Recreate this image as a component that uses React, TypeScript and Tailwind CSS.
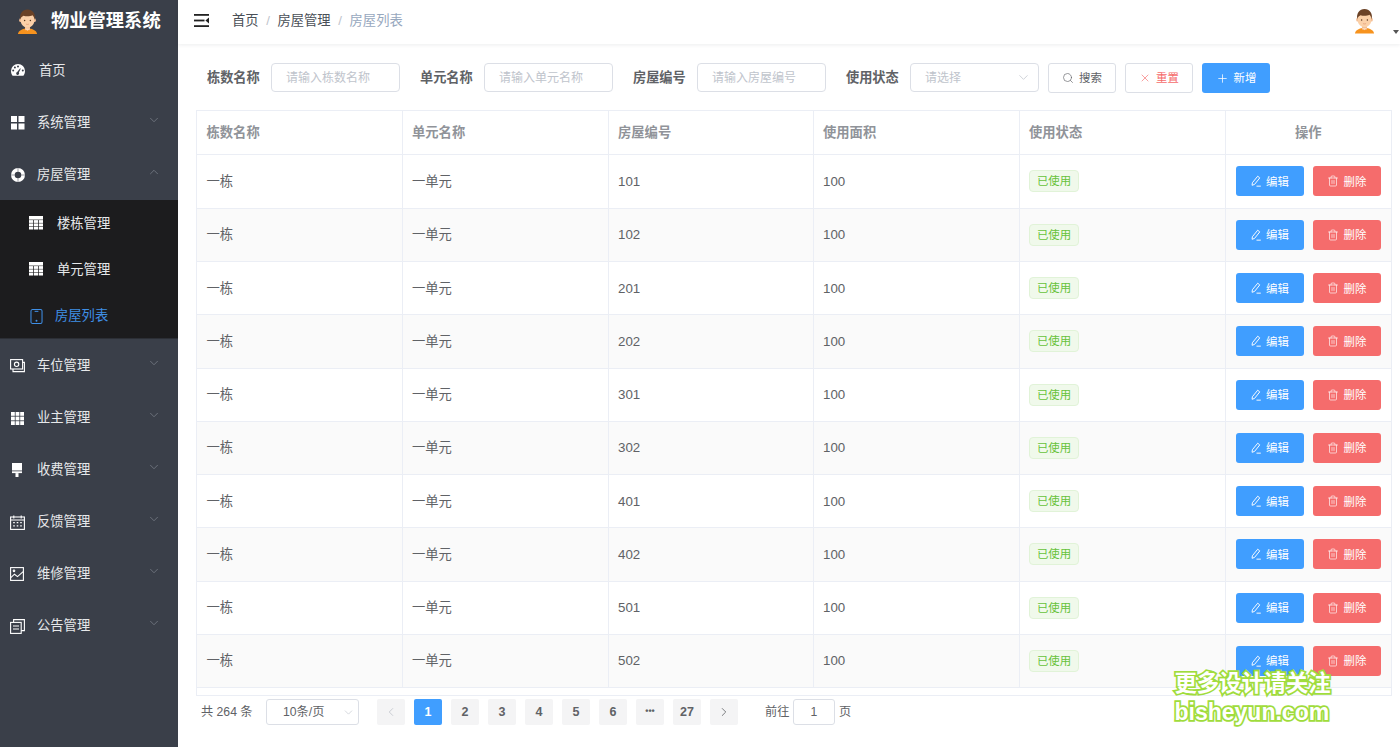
import React from "react";
import { ChevronDown, ChevronUp, ChevronLeft, ChevronRight, Search, X, Plus, Trash2 } from "lucide-react";

const FONT = "font-['Liberation_Sans','Noto_Sans_CJK_SC',sans-serif]";

type IP = { className?: string };
const Gauge = ({ className }: IP) => (
  <svg viewBox="0 0 14 12" className={className} fill="currentColor">
    <path fillRule="evenodd" d="M7 0a7 7 0 0 0-7 7c0 1.9.6 3.3 1.4 4.4.2.3.5.4.8.4h9.6c.3 0 .6-.1.8-.4C13.4 10.3 14 8.9 14 7a7 7 0 0 0-7-7zM2.2 7.6a1 1 0 1 1 0-2 1 1 0 0 1 0 2zm1.7-3.2a1 1 0 1 1 0-2 1 1 0 0 1 0 2zM7 3.4a1 1 0 1 1 0-2 1 1 0 0 1 0 2zm.9 5.1a1.5 1.5 0 1 1-1.7-.6l3-3.6.5.4-1.8 3.8zm3.9-.9a1 1 0 1 1 0-2 1 1 0 0 1 0 2z" />
  </svg>
);
const Squares = ({ className }: IP) => (
  <svg viewBox="0 0 14 14" className={className} fill="currentColor">
    <rect x="0" y="0" width="6" height="6" />
    <rect x="7.5" y="0" width="6" height="6" />
    <rect x="0" y="7.5" width="6" height="6" />
    <rect x="7.5" y="7.5" width="6" height="6" />
  </svg>
);
const Buoy = ({ className }: IP) => (
  <svg viewBox="0 0 14 14" className={className} fill="currentColor">
    <path fillRule="evenodd" d="M7 0a7 7 0 1 0 0 14A7 7 0 0 0 7 0zm0 3.700a3.300 3.300 0 1 1 0 6.600 3.300 3.300 0 0 1 0-6.600z" />
    <path d="M7 0v3.800M7 10.200V14M0 7h3.800M10.200 7H14" stroke="#3a3f49" strokeWidth="0.5" />
  </svg>
);
const TableIcon = ({ className }: IP) => (
  <svg viewBox="0 0 14 14" className={className} fill="currentColor">
    <rect x="0" y="0" width="14" height="3.600" />
    {[4.1, 7.4, 10.7].flatMap((y) =>
      [0, 4.9, 9.8].map((x) => <rect key={`${x}-${y}`} x={x} y={y} width="4.200" height="2.800" />)
    )}
  </svg>
);
const Tablet = ({ className }: IP) => (
  <svg viewBox="0 0 13 16" className={className} fill="none" stroke="currentColor" strokeWidth="1.1">
    <rect x="0.600" y="0.600" width="11.800" height="14.800" rx="1.600" />
    <path d="M4.500 2.500h4" />
    <circle cx="6.500" cy="12.600" r="0.500" fill="currentColor" />
  </svg>
);
const Money = ({ className }: IP) => (
  <svg viewBox="0 0 15 14" className={className} fill="none" stroke="currentColor" strokeWidth="1.1">
    <rect x="0.600" y="0.600" width="12" height="9.400" />
    <circle cx="6.600" cy="5.300" r="2.200" />
    <path d="M3 10v2.600h11.400V3.400h-1.800" />
  </svg>
);
const Grid9 = ({ className }: IP) => (
  <svg viewBox="0 0 13 13" className={className} fill="currentColor">
    {[0, 4.6, 9.2].flatMap((y) =>
      [0, 4.6, 9.2].map((x) => <rect key={`${x}-${y}`} x={x} y={y} width="3.800" height="3.800" />)
    )}
  </svg>
);
const Brush = ({ className }: IP) => (
  <svg viewBox="0 0 12 14" className={className} fill="currentColor">
    <rect x="1" y="0" width="10" height="7.500" />
    <rect x="1" y="8.300" width="10" height="1.800" />
    <rect x="4.500" y="10.100" width="3" height="3.900" />
  </svg>
);
const DateIcon = ({ className }: IP) => (
  <svg viewBox="0 0 15 15" className={className} fill="none" stroke="currentColor" strokeWidth="1.1">
    <rect x="0.600" y="2" width="13.800" height="12.400" />
    <path d="M0.600 5h13.800M3.800 0.400v3M11.200 0.400v3" />
    <path d="M3.200 7.600h1.600M6.700 7.600h1.600M10.200 7.600h1.600M3.200 10.800h1.600M6.700 10.800h1.600M10.200 10.800h1.600" strokeWidth="1.2" />
  </svg>
);
const Picture = ({ className }: IP) => (
  <svg viewBox="0 0 14 14" className={className} fill="none" stroke="currentColor" strokeWidth="1.1">
    <rect x="0.600" y="0.600" width="12.800" height="12.800" />
    <path d="M0.800 10.600l3.700-3.400 3 2.400 5.700-5" />
    <circle cx="4" cy="3.800" r="0.800" />
  </svg>
);
const Copy = ({ className }: IP) => (
  <svg viewBox="0 0 15 15" className={className} fill="none" stroke="currentColor" strokeWidth="1.1">
    <rect x="0.600" y="3.400" width="10.600" height="11" />
    <path d="M3.600 3.400V0.600h10.800v11h-3.200M3 7h6M3 10h6" />
  </svg>
);
const Fold = ({ className }: IP) => (
  <svg viewBox="0 0 15 13" className={className} fill="currentColor">
    <rect x="0" y="0" width="15" height="1.800" />
    <rect x="0" y="5.600" width="10.500" height="1.800" />
    <rect x="0" y="11.200" width="15" height="1.800" />
    <path d="M15 3.500v6L11.400 6.500z" />
  </svg>
);
const Pen = ({ className }: IP) => (
  <svg viewBox="0 0 14 14" className={className} fill="none" stroke="currentColor" strokeWidth="1.1">
    <path d="M9 1.400l2.400 2L5.300 11 2.400 12l.4-3z" />
    <path d="M7.600 13h5" />
  </svg>
);
const Face = ({ className }: IP) => (
  <svg viewBox="0 0 24 26" className={className}>
    <path d="M2 26c.6-3.600 4.800-5.600 10-5.600s9.400 2 10 5.600z" fill="#f7931e" />
    <rect x="9.400" y="17" width="5.200" height="5" fill="#f3bd94" />
    <path d="M9.400 20.400l2.600 2.200 2.600-2.200z" fill="#fbd7b8" />
    <ellipse cx="4.800" cy="11.600" rx="1.500" ry="2" fill="#f3bd94" />
    <ellipse cx="19.200" cy="11.600" rx="1.500" ry="2" fill="#f3bd94" />
    <path d="M5 9c0-4 3-6 7-6s7 2 7 6v3.400c0 4-3.600 7-7 7s-7-3-7-7z" fill="#fbd0a8" />
    <path d="M4.400 11.400C3.400 5 6.600.6 12 .6s8.800 4.400 7.600 10.800c-.6-2.600-1.400-4-2.400-4.800-2.400 1.200-6.400 1.400-9.400.4-1.600.8-3 2-3.400 3.800z" fill="#6b4226" />
    <circle cx="9" cy="12" r=".8" fill="#5a3a22" />
    <circle cx="15" cy="12" r=".8" fill="#5a3a22" />
    <path d="M10.400 15.600c1 .6 2.200.6 3.200 0" stroke="#d98b66" strokeWidth=".6" fill="none" />
  </svg>
);

const topItems1: [string, React.FC<IP>, string][] = [
  ["系统管理", Squares, "w-[14px] h-[14px] ml-px"],
];
const topItems2: [string, React.FC<IP>, string][] = [
  ["车位管理", Money, "w-[15px] h-[14px]"],
  ["业主管理", Grid9, "w-[13px] h-[13px] ml-px"],
  ["收费管理", Brush, "w-[12px] h-[14px] ml-px"],
  ["反馈管理", DateIcon, "w-[15px] h-[15px]"],
  ["维修管理", Picture, "w-[14px] h-[14px]"],
  ["公告管理", Copy, "w-[15px] h-[15px]"],
];

function MenuRow({ label, Icon, iconCls, open }: { label: string; Icon: React.FC<IP>; iconCls: string; open?: boolean }) {
  return (
    <div className="h-[52px] flex items-center pt-[2px] pl-[10px] pr-[17px] text-[13.300px] text-[#e6e8ea]">
      <span className="w-[27px] flex items-center text-white">
        <Icon className={iconCls} />
      </span>
      <span className="flex-1">{label}</span>
      {open ? (
        <ChevronUp className="w-[14px] h-[14px] text-[#7f858f] -mt-[7px]" strokeWidth={1.2} />
      ) : (
        <ChevronDown className="w-[14px] h-[14px] text-[#7f858f] -mt-[7px]" strokeWidth={1.2} />
      )}
    </div>
  );
}

function Sidebar() {
  return (
    <aside className="w-[178px] shrink-0 h-full bg-[#3a3f49] flex flex-col">
      <div className="h-[44px] flex items-center pl-[16px] shrink-0">
        <Face className="w-[23px] h-[25px] -mt-[2px]" />
        <span className="ml-[12px] text-[18.300px] font-bold text-white leading-none -mt-[2px]">物业管理系统</span>
      </div>
      <div className="h-[52px] flex items-center pt-[2px] pl-[11px] text-[13.300px] text-[#e6e8ea]">
        <span className="w-[28px] flex items-center text-white">
          <Gauge className="w-[14px] h-[12px] -mt-[2px]" />
        </span>
        <span>首页</span>
      </div>
      {topItems1.map(([l, I, c]) => (
        <MenuRow key={l} label={l} Icon={I} iconCls={c} />
      ))}
      <MenuRow label="房屋管理" Icon={Buoy} iconCls="w-[14px] h-[14px] ml-px" open />
      <div className="bg-[#1c1c1e] h-[139px] flex flex-col text-[13.300px] pl-[29px] border-b border-[#2c2f36]">
        <div className="h-[46px] flex items-center pt-[2px] text-[#e6e8ea]">
          <TableIcon className="w-[14px] h-[14px] text-white -mt-[3px]" />
          <span className="ml-[14px]">楼栋管理</span>
        </div>
        <div className="h-[46px] flex items-center pt-[2px] text-[#e6e8ea]">
          <TableIcon className="w-[14px] h-[14px] text-white -mt-[3px]" />
          <span className="ml-[14px]">单元管理</span>
        </div>
        <div className="h-[46px] flex items-center pt-[2px] text-[#3f8fe6]">
          <Tablet className="w-[13px] h-[15px] ml-px" />
          <span className="ml-[12px]">房屋列表</span>
        </div>
      </div>
      {topItems2.map(([l, I, c]) => (
        <MenuRow key={l} label={l} Icon={I} iconCls={c} />
      ))}
    </aside>
  );
}

function Header() {
  return (
    <header className="h-[44px] shrink-0 bg-white shadow-[0_1px_4px_rgba(0,21,41,0.08)] flex items-center pl-[16px] text-[13.300px] relative z-10">
      <Fold className="w-[15px] h-[13px] text-[#222] -mt-[3px]" />
      <nav className="ml-[23px] flex items-center -mt-[3px] text-[#4a4f57]">
        <span>首页</span>
        <span className="mx-[7.600px] text-[#c0c4cc]">/</span>
        <span>房屋管理</span>
        <span className="mx-[7.600px] text-[#c0c4cc]">/</span>
        <span className="text-[#97a8be]">房屋列表</span>
      </nav>
      <div className="ml-auto flex items-start h-full relative">
        <Face className="w-[23px] h-[26px] mt-[8px] mr-[24px]" />
        <span className="absolute right-[1px] top-[30px] w-0 h-0 border-x-[3px] border-x-transparent border-t-[4px] border-t-[#555]" />
      </div>
    </header>
  );
}

function Field({ label, ph }: { label: string; ph: string }) {
  return (
    <div className="flex items-center">
      <span className="text-[13.200px] font-bold text-[#606266] w-[64px]">{label}</span>
      <div className="w-[129px] h-[29px] border border-[#dcdfe6] rounded-[4px] flex items-center pl-[14px] pt-px text-[12px] text-[#c0c4cc] bg-white">
        {ph}
      </div>
    </div>
  );
}

function Filters() {
  const btn = "w-[68px] h-[30px] rounded-[3px] flex items-center justify-center text-[11.400px]";
  return (
    <div className="h-[66px] flex items-center pt-[2px] pl-[29px] shrink-0">
      <div className="flex items-center gap-[20px] -mt-px">
        <Field label="栋数名称" ph="请输入栋数名称" />
        <Field label="单元名称" ph="请输入单元名称" />
        <Field label="房屋编号" ph="请输入房屋编号" />
        <div className="flex items-center">
          <span className="text-[13.200px] font-bold text-[#606266] w-[64px]">使用状态</span>
          <div className="w-[129px] h-[29px] border border-[#dcdfe6] rounded-[4px] flex items-center pl-[14px] pr-[7px] text-[12px] text-[#c0c4cc]">
            <span className="flex-1 pt-px">请选择</span>
            <ChevronDown className="w-[15px] h-[15px] text-[#c0c4cc]" strokeWidth={1.2} />
          </div>
        </div>
      </div>
      <div className="flex items-center gap-[9px] ml-[9px]">
        <button className={`${btn} border border-[#dcdfe6] bg-white text-[#606266]`}>
          <Search className="w-[12px] h-[12px] mr-[5px]" strokeWidth={1.3} />
          <span className="pt-px">搜索</span>
        </button>
        <button className={`${btn} border border-[#dcdfe6] bg-white text-[#f56c6c]`}>
          <X className="w-[12px] h-[12px] mr-[5px]" strokeWidth={1.3} />
          <span className="pt-px">重置</span>
        </button>
        <button className={`${btn} bg-[#409eff] text-white`}>
          <Plus className="w-[13px] h-[13px] mr-[5px]" strokeWidth={1.4} />
          <span className="pt-px">新增</span>
        </button>
      </div>
    </div>
  );
}

const rooms = ["101", "102", "201", "202", "301", "302", "401", "402", "501", "502"];

function DataTable() {
  const td = "border-r border-b border-[#ebeef5] pl-[9.500px] pr-0 py-0 text-left font-normal";
  const cell = `${td} pt-px`;
  return (
    <div className="ml-[18px] mr-[8px] h-[586px] shrink-0 border border-[#ebeef5] overflow-hidden">
      <table className="w-full table-fixed border-collapse text-[13.300px] text-[#606266]">
        <colgroup>
          <col className="w-[205px]" />
          <col className="w-[206px]" />
          <col className="w-[205px]" />
          <col className="w-[206px]" />
          <col className="w-[206px]" />
          <col />
        </colgroup>
        <thead>
          <tr className="h-[43px] text-[#909399]">
            {["栋数名称", "单元名称", "房屋编号", "使用面积", "使用状态"].map((h) => (
              <th key={h} className={`${td} pt-[2px] !font-bold`}>
                {h}
              </th>
            ))}
            <th className="border-b border-[#ebeef5] pt-[2px] text-center font-bold">操作</th>
          </tr>
        </thead>
        <tbody>
          {rooms.map((r, i) => (
            <tr
              key={r}
              className={`${i === 0 ? "h-[54.250px]" : "h-[53.250px]"} ${i % 2 ? "bg-[#fafafa]" : "bg-white"}`}
            >
              <td className={cell}>一栋</td>
              <td className={cell}>一单元</td>
              <td className={cell}>{r}</td>
              <td className={cell}>100</td>
              <td className={td}>
                <span className="inline-flex items-center justify-center w-[50px] h-[22px] pt-px rounded-[4px] bg-[#f0f9eb] border border-[#e1f3d8] text-[11.400px] text-[#67c23a]">
                  已使用
                </span>
              </td>
              <td className="border-b border-[#ebeef5] p-0">
                <div className="flex items-center pl-[10px] gap-[9px]">
                  <button className="w-[68px] h-[30px] rounded-[3px] bg-[#409eff] text-white text-[11.400px] flex items-center justify-center">
                    <Pen className="w-[12px] h-[12px] mr-[4px]" />
                    <span className="pt-[2px]">编辑</span>
                  </button>
                  <button className="w-[68px] h-[30px] rounded-[3px] bg-[#f56c6c] text-white text-[11.400px] flex items-center justify-center">
                    <Trash2 className="w-[12px] h-[12px] mr-[5px]" strokeWidth={1.3} />
                    <span className="pt-[2px]">删除</span>
                  </button>
                </div>
              </td>
            </tr>
          ))}
        </tbody>
      </table>
    </div>
  );
}

function PageBtn({ children, active }: { children: React.ReactNode; active?: boolean }) {
  return (
    <span
      className={`w-[28px] h-[26px] rounded-[2px] flex items-center justify-center text-[12.500px] font-bold ${
        active ? "bg-[#409eff] text-white" : "bg-[#f4f4f5] text-[#606266]"
      }`}
    >
      {children}
    </span>
  );
}

function Pagination() {
  return (
    <div className="flex items-center pl-[23px] h-[30px] mt-px shrink-0 text-[12.200px] text-[#606266]">
      <span className="w-[65px]">共 264 条</span>
      <div className="w-[93px] h-[26px] border border-[#dcdfe6] rounded-[3px] flex items-center pl-[16px] pr-[3px]">
        <span className="flex-1">10条/页</span>
        <ChevronDown className="w-[13px] h-[13px] text-[#c0c4cc]" strokeWidth={1.2} />
      </div>
      <div className="ml-[18px] flex items-center gap-[9px]">
        <PageBtn>
          <ChevronLeft className="w-[14px] h-[14px] text-[#c0c4cc]" strokeWidth={1.4} />
        </PageBtn>
        <PageBtn active>1</PageBtn>
        <PageBtn>2</PageBtn>
        <PageBtn>3</PageBtn>
        <PageBtn>4</PageBtn>
        <PageBtn>5</PageBtn>
        <PageBtn>6</PageBtn>
        <PageBtn>
          <span className="text-[9px]">•••</span>
        </PageBtn>
        <PageBtn>27</PageBtn>
        <PageBtn>
          <ChevronRight className="w-[14px] h-[14px] text-[#606266]" strokeWidth={1.4} />
        </PageBtn>
      </div>
      <span className="ml-[27px] w-[24px] whitespace-nowrap">前往</span>
      <div className="mx-[4px] w-[42px] h-[26px] border border-[#dcdfe6] rounded-[3px] flex items-center justify-center">1</div>
      <span>页</span>
    </div>
  );
}

export default function App() {
  return (
    <div className={`w-[1400px] h-[747px] flex overflow-hidden bg-white relative ${FONT}`}>
      <Sidebar />
      <main className="flex-1 flex flex-col min-w-0">
        <Header />
        <Filters />
        <DataTable />
        <Pagination />
      </main>
      <div className="absolute left-[1174.500px] top-[670px] text-white font-bold leading-[28px] [-webkit-text-stroke:3.500px_#a0dc3c] [paint-order:stroke_fill] font-['Liberation_Sans','Noto_Sans_CJK_SC',sans-serif]">
        <div className="text-[22.300px] whitespace-nowrap">更多设计请关注</div>
        <div className="text-[23px] whitespace-nowrap">bisheyun.com</div>
      </div>
    </div>
  );
}
